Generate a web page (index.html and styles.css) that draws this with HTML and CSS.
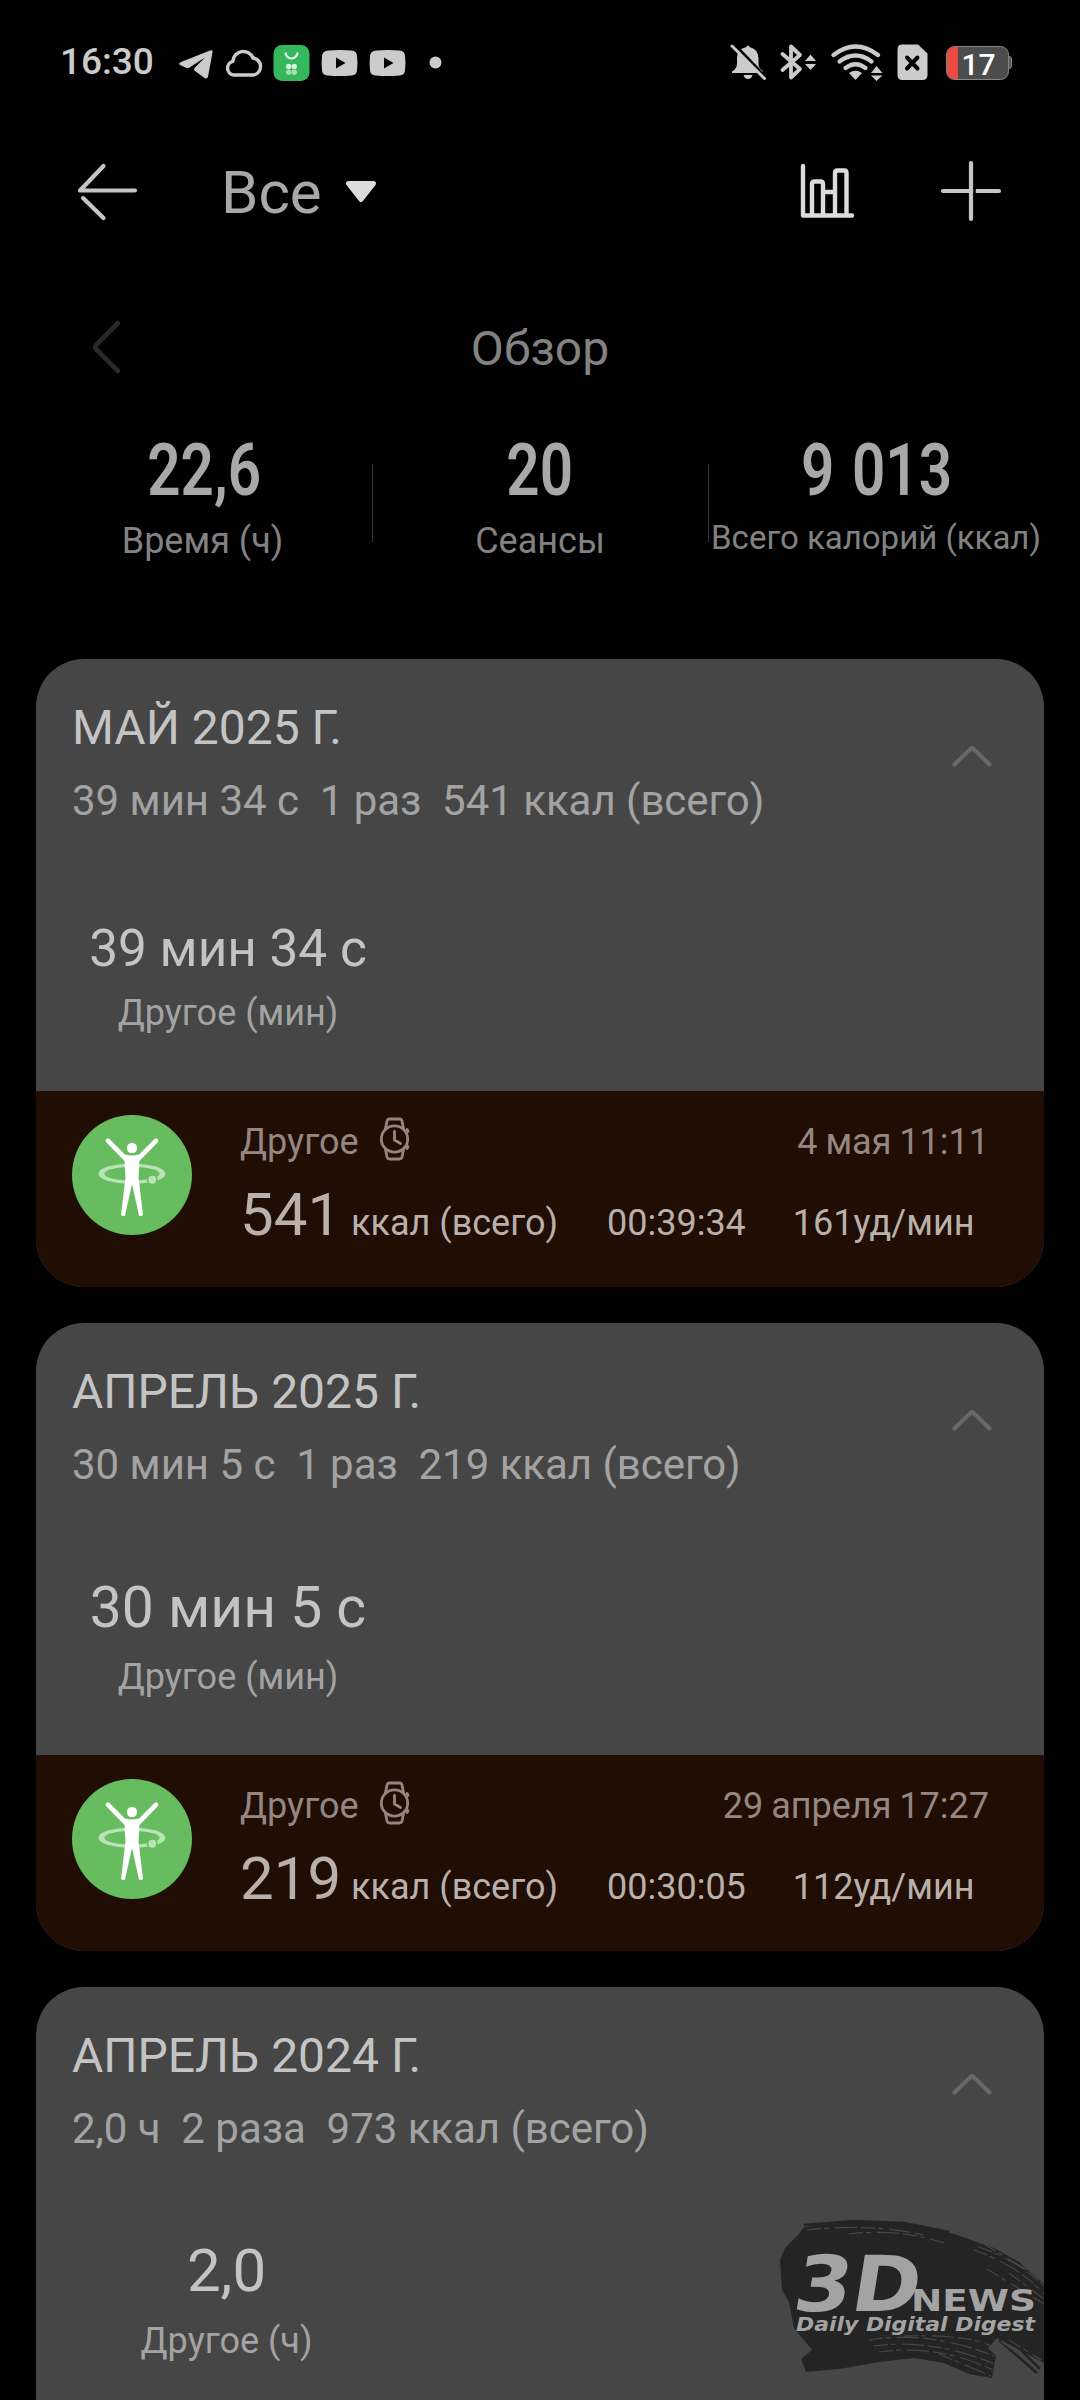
FILE: index.html
```html
<!DOCTYPE html>
<html lang="ru">
<head>
<meta charset="utf-8">
<title>Все</title>
<link rel="stylesheet" href="styles.css">
</head>
<body>
<svg class="defs" width="0" height="0" aria-hidden="true">
  <symbol id="hoop" viewBox="0 0 120 120">
    <path fill="#b7e4b4" fill-rule="evenodd" d="M60 48.700c19 0 33.500 4.300 33.500 10s-14.500 10-33.500 10-33.500-4.300-33.500-10 14.500-10 33.500-10zM60 52c-15.500 0-27.500 2.800-27.500 6.700S44.500 65.400 60 65.400s27.500-2.800 27.500-6.700S75.500 52 60 52z"/>
    <circle cx="60" cy="33" r="5.200" fill="#fff"/>
    <path d="M34 24.500q2-2.500 4 0L53 39.500q7 2 14 0L82 24.500q2-2.500 4-.3q1 1.500-.5 3.200L67.500 46L66.500 62L71 100q-1.500 2-4 .5L60 69L53 100.500q-2.500 1.500-4-.5L53.500 62L52.500 46L34.500 27.500q-1.500-1.500-.5-3z" fill="#fff"/>
    <circle cx="80.300" cy="64.700" r="4.700" fill="#b7e4b4" stroke="#66bc5f" stroke-width="1.500"/>
  </symbol>
  <symbol id="watch" viewBox="0 0 32 44">
    <g fill="none" stroke="currentColor" stroke-width="2.800" stroke-linejoin="round" stroke-linecap="round">
      <circle cx="15.500" cy="22" r="13.200"/>
      <path d="M6.500 11.500L8 4q.5-2 2.500-2h10q2 0 2.500 2l1.500 7.500M6.500 32.500L8 40q.5 2 2.500 2h10q2 0 2.500-2l1.500-7.500M15.500 14.500v8.500l6 3.500M28 12.500l1 2M28 31.500l1-2"/>
    </g>
  </symbol>
  <symbol id="up" viewBox="0 0 40 22">
    <path d="M2.500 19.500L19 3.500q1-1 2 0L37.500 19.500" fill="none" stroke="currentColor" stroke-width="4.200" stroke-linecap="round"/>
  </symbol>
</svg>
<div class="screen">
  <header class="status">
    <span class="clock">16:30</span>
    <svg class="notif" width="266" height="40" viewBox="0 0 266 40">
      <g fill="#cbcbcb">
        <path d="M1 21Q-1 19.500 2 18L31 6.500q3-1 2.500 2L29 32.500q-.7 3-3.500 1.500L16 27Q14 25.500 16 23.500L26 13.500L10.500 23.500q-1.500 1-3.500.2z"/>
        <path d="M149.500 6.400Q161 5.400 172.500 6.400Q178 7 178 12Q179 19 178 26Q178 31 172.500 31.600Q161 32.600 148.500 31.600Q143 31 143 26Q142.200 19 143 12Q143 7 149.500 6.400zM157 13.500v11l9.500-5.500z"/>
        <path d="M197.500 6.400Q209 5.400 220.500 6.400Q226 7 226 12Q227 19 226 26Q226 31 220.500 31.600Q209 32.600 196.500 31.600Q191 31 191 26Q190.200 19 191 12Q191 7 197.500 6.400zM205 13.500v11l9.500-5.500z"/>
        <circle cx="256.500" cy="18.500" r="6"/>
      </g>
      <path d="M54.500 31a7 7 0 0 1-.7-13.700A10.500 10.500 0 0 1 74 14a8.600 8.600 0 0 1 .5 17z" fill="none" stroke="#cbcbcb" stroke-width="3.400" stroke-linejoin="round"/>
      <rect x="94.500" y="1" width="36" height="36" rx="8.500" fill="#35b75b"/>
      <path d="M106.500 8.500a6 6 0 0 0 12 0" fill="none" stroke="#e9f8ec" stroke-width="2.200"/>
      <g fill="#d8f3de"><circle cx="109.700" cy="22.500" r="2.700"/><circle cx="115.300" cy="22.500" r="2.700"/><circle cx="109.700" cy="28.200" r="2.700" fill="#a4dfb3"/><circle cx="115.300" cy="28.200" r="2.700" fill="#a4dfb3"/></g>
    </svg>
    <svg class="sys" width="284" height="40" viewBox="0 0 284 40">
      <g fill="#cbcbcb">
        <path d="M18 1.500q1.500 0 1.500 1.500Q28 5 28.500 14v6q0 4 4 6.500l.5 2.500H2v-1.500q5-3 5-8v-5.500Q7 5 16.500 3q0-1.500 1.500-1.500zM13.500 31h9q-1 4-4.500 4t-4.500-4z"/>
        <path d="M75 17h11L80.500 10.500zM75 20h11l-5.500 6z"/>
        <path d="M141 29h11.500L146.500 22zM141 31.500h11.500L146.500 37z"/>
        <path d="M125.500 36l-6.500-7q6.500-4.500 13 0z"/>
        <path d="M172 .5h16l9.500 9V31q0 5-5 5h-20q-5 0-5-5V5.500q0-5 4.500-5z"/>
      </g>
      <path d="M4 0L36.500 34" stroke="#000" stroke-width="3"/>
      <path d="M2 2L34.500 34.500" stroke="#cbcbcb" stroke-width="3" stroke-linecap="round"/>
      <path d="M52.500 10L70 25L61 33.500V2.500L70 11L52.500 26" fill="none" stroke="#cbcbcb" stroke-width="3.800" stroke-linecap="round" stroke-linejoin="round"/>
      <g fill="none" stroke="#cbcbcb" stroke-width="4.200" stroke-linecap="round"><path d="M103.500 11Q125.500-6 148 11"/><path d="M109.500 17.500Q125.500 5.500 141.500 17.500"/><path d="M115.500 24Q125.500 16.500 135.500 24"/></g>
      <path d="M177 13.500l10.500 11M187.500 13.500L177 24.500" stroke="#000" stroke-width="4" stroke-linecap="round"/>
      <path d="M278 12.500h1.500q2 0 2 2.500v7q0 2.500-2 2.500H278" fill="#5a5a5a" stroke="#858585"/>
      <rect x="216.500" y="2.500" width="62" height="33" rx="8" fill="#4c4c4c" stroke="#858585"/>
      <path d="M228 3H223.500q-6.500 1-6.500 7.500v17q0 6.500 6.500 7.500h4.500z" fill="#ea4a40"/>
      <text x="248.500" y="30.500" class="battery" text-anchor="middle">17</text>
    </svg>
  </header>

  <nav class="bar">
    <svg width="64" height="64" viewBox="0 0 64 64" fill="none" stroke="#c6c6c6" stroke-width="4.200" stroke-linecap="round" stroke-linejoin="round"><path d="M28.500 7L5 31.500H60M8 39L28.500 59"/><path d="M2 36.200H13" stroke="#000" stroke-width="2" stroke-linecap="butt"/></svg>
    <span class="heading">Все</span>
    <svg class="caret" width="32" height="24" viewBox="0 0 32 24"><path d="M3.500 3.500H28.500L16 19.500z" fill="#dcdcdc" stroke="#dcdcdc" stroke-width="5" stroke-linejoin="round"/></svg>
    <svg class="chart" width="56" height="56" viewBox="0 0 56 56" fill="none" stroke="#dcdcdc" stroke-width="4.400" stroke-linecap="round" stroke-linejoin="round"><path d="M3 3V52.500H52M12 51V21q0-2.500 2.500-2.500h6q2.500 0 2.500 2.500V51M23 29H35M35 51V10q0-2.500 2.500-2.500h7q2 0 2 2.500V51"/></svg>
    <svg width="64" height="64" viewBox="0 0 64 64" fill="none" stroke="#c6c6c6" stroke-width="4.200" stroke-linecap="round"><path d="M32 4V60M4 32H60"/><path d="M35.500 28V36" stroke="#000" stroke-width="2.500" stroke-linecap="butt"/></svg>
  </nav>

  <div class="overview">
    <svg class="prev" width="32" height="56" viewBox="0 0 32 56"><path d="M28 4L6.500 25.500q-2.500 2.500 0 5L28 52" fill="none" stroke="#292929" stroke-width="4.600" stroke-linecap="round"/></svg>
    <span class="overview-title">Обзор</span>
  </div>

  <section class="stats">
    <div class="stat"><b>22,6</b><span>Время (ч)</span></div>
    <div class="stat"><b>20</b><span>Сеансы</span></div>
    <div class="stat small"><b>9 013</b><span>Всего калорий (ккал)</span></div>
  </section>

  <main class="months">
    <article class="card">
      <div class="summary">
        <h2>МАЙ 2025 Г.</h2>
        <p class="totals">39 мин 34 с&nbsp; 1 раз&nbsp; 541 ккал (всего)</p>
        <svg class="toggle" width="40" height="22"><use href="#up"/></svg>
        <div class="sport"><span class="amount tight">39 мин 34 с</span><span class="kind">Другое (мин)</span></div>
      </div>
      <div class="workout">
        <svg class="badge" width="120" height="120"><use href="#hoop"/></svg>
        <div class="details">
          <div class="line"><span>Другое</span><svg class="watch" width="32" height="44"><use href="#watch"/></svg><time>4 мая 11:11</time></div>
          <div class="numbers"><span class="kcal"><b>541</b> ккал (всего)</span><span class="dur">00:39:34</span><span>161уд/мин</span></div>
        </div>
      </div>
    </article>
    <article class="card">
      <div class="summary">
        <h2>АПРЕЛЬ 2025 Г.</h2>
        <p class="totals">30 мин 5 с&nbsp; 1 раз&nbsp; 219 ккал (всего)</p>
        <svg class="toggle" width="40" height="22"><use href="#up"/></svg>
        <div class="sport"><span class="amount medium">30 мин 5 с</span><span class="kind">Другое (мин)</span></div>
      </div>
      <div class="workout">
        <svg class="badge" width="120" height="120"><use href="#hoop"/></svg>
        <div class="details">
          <div class="line"><span>Другое</span><svg class="watch" width="32" height="44"><use href="#watch"/></svg><time>29 апреля 17:27</time></div>
          <div class="numbers"><span class="kcal"><b>219</b> ккал (всего)</span><span class="dur">00:30:05</span><span>112уд/мин</span></div>
        </div>
      </div>
    </article>
    <article class="card">
      <div class="summary">
        <h2>АПРЕЛЬ 2024 Г.</h2>
        <p class="totals">2,0 ч&nbsp; 2 раза&nbsp; 973 ккал (всего)</p>
        <svg class="toggle" width="40" height="22"><use href="#up"/></svg>
        <div class="sport narrow"><span class="amount">2,0</span><span class="kind">Другое (ч)</span></div>
      </div>
    </article>
  </main>

  <svg class="watermark" width="265" height="180" viewBox="0 0 265 180">
    <path fill="#242424" d="M25 7L60 2L100 1L140 5L175 14L215 28L240 42L265 64V143L246 133L218 118L209 128L217 136L213 158L190 154L165 143L135 138L100 142L60 149L27 152L22 139L33 130L15 108L10 82L3 70L1 40L6 28L20 14z"/>
    <path fill="none" stroke="#242424" stroke-width="2.500" d="M220 120L258 153M232 120L261 149M25 5L75 1L125 3L170 12"/>
    <g fill="none" stroke="#464646" stroke-width="1.200" stroke-dasharray="14 3 5 6 22 4">
      <path d="M28 10Q90 3 145 15M70 14Q120 8 165 23M195 30Q240 46 265 74M200 27Q240 41 265 66M205 24L265 60M208 49L265 84M230 53L265 79M90 120Q150 110 215 136M95 126Q155 118 218 145M100 132Q160 124 214 150M125 116Q190 114 214 127M160 134L212 156"/>
      <path d="M222 121L256 147M230 120L262 140"/>
    </g>
    <g fill="#a3a3a3">
      <text class="logo-3d" transform="translate(12 91) skewX(-9)" textLength="126" lengthAdjust="spacingAndGlyphs">3D</text>
      <text class="logo-news" x="132" y="91" textLength="125" lengthAdjust="spacingAndGlyphs">NEWS</text>
      <text class="logo-tag" x="17" y="110.500" textLength="239" lengthAdjust="spacingAndGlyphs">Daily Digital Digest</text>
    </g>
  </svg>
</div>
</body>
</html>
```
FILE: styles.css
```css
* { box-sizing: border-box; margin: 0; padding: 0; }
html, body { background: #000; }
body { font-family: Roboto, "Noto Sans", sans-serif; font-weight: 400; }
svg { display: block; flex: none; }
.defs { position: absolute; }
.screen { position: relative; width: 1080px; height: 2400px; overflow: hidden; background: #000; display: flex; flex-direction: column; }
.screen > * { flex: none; }

.status { height: 126px; padding: 44px 66px 0 60px; display: flex; align-items: flex-start; color: #cbcbcb; }
.clock { width: 119px; font-size: 37px; font-weight: 500; line-height: 36px; white-space: nowrap; }
.sys { margin-left: auto; }
.battery { font: 500 30px Roboto, sans-serif; fill: #fff; }

.bar { height: 130px; padding: 0 77px 0 75px; display: flex; align-items: center; }
.heading { margin-left: 82px; padding-top: 4px; font-size: 60px; line-height: 72px; color: #a8a8a8; }
.caret { margin: 2px 0 0 23px; }
.chart { margin-left: auto; margin-right: 83px; }

.overview { height: 174px; padding: 65px 90px 0; display: grid; grid-template-columns: 32px 1fr 32px; align-items: start; color: #828282; }
.prev { margin-top: -2px; }
.overview-title { text-align: center; font-size: 48px; line-height: 56px; }

.stats { height: 229px; padding: 0 36px; display: grid; grid-template-columns: repeat(3, 1fr); }
.stat { position: relative; display: flex; flex-direction: column; align-items: center; color: #828282; font-size: 36px; white-space: nowrap; }
.stat b { font-size: 73px; line-height: 80px; font-weight: 600; color: #a8a8a8; word-spacing: 4px; transform: scaleX(.8); }
.stat span { line-height: 44px; margin-top: 9px; }
.stat.small span { font-size: 33px; margin-top: 6px; }
.stat:first-child span { margin-right: 3px; }
.stat + .stat::before { content: ""; position: absolute; left: 0; top: 34px; width: 1px; height: 78px; background: #3a3a3a; }

.months { padding: 0 36px; display: flex; flex-direction: column; gap: 36px; }
.card { height: 628px; flex: none; border-radius: 48px; overflow: hidden; background: #464646; display: flex; flex-direction: column; }
.summary { height: 432px; padding: 41px 36px 0; display: grid; grid-template-columns: 1fr 44px; grid-template-rows: 56px 96px 1fr; }
.card h2 { font-size: 48px; line-height: 56px; font-weight: 400; color: #c4c4c4; }
.totals { grid-row: 2; padding-top: 20px; font-size: 42px; line-height: 50px; letter-spacing: -.03px; color: #a3a3a3; white-space: nowrap; }
.toggle { grid-column: 2; grid-row: 1 / 3; margin: 45px 0 0 -12px; color: #686868; }
.sport { grid-row: 3; width: 312px; padding-top: 56px; display: flex; flex-direction: column; align-items: center; white-space: nowrap; }
.sport.narrow { width: 309px; padding-top: 55px; }
.amount { font-size: 60px; line-height: 72px; color: #c4c4c4; }
.amount.medium { font-size: 57px; }
.amount.tight { font-size: 51.300px; margin: 5px 0 -5px; }
.kind { margin-top: 11px; font-size: 36px; line-height: 44px; color: #a3a3a3; }
.narrow .kind { margin-top: 12px; }

.workout { flex: 1; padding: 24px 55px 0 36px; display: flex; gap: 48px; background: #200d04; }
.badge { border-radius: 50%; background: #66bc5f; }
.details { flex: 1; font-size: 36px; color: #b9b0ab; white-space: nowrap; }
.line { height: 50px; display: flex; align-items: flex-start; line-height: 54px; color: #958680; }
.watch { margin: 2px 0 0 20px; }
.line time { margin-left: auto; word-spacing: -1px; }
.numbers { padding-top: 12px; display: flex; align-items: baseline; line-height: 75px; }
.kcal b { font-size: 60px; font-weight: 400; margin-right: 1px; }
.dur { margin: 0 47px 0 49px; }

.watermark { position: absolute; left: 779px; top: 2220px; }
.logo-3d { font: bold 77px "DejaVu Sans", sans-serif; }
.logo-news { font: bold 31px "DejaVu Sans", sans-serif; }
.logo-tag { font: italic bold 20px "DejaVu Sans", sans-serif; }
```
